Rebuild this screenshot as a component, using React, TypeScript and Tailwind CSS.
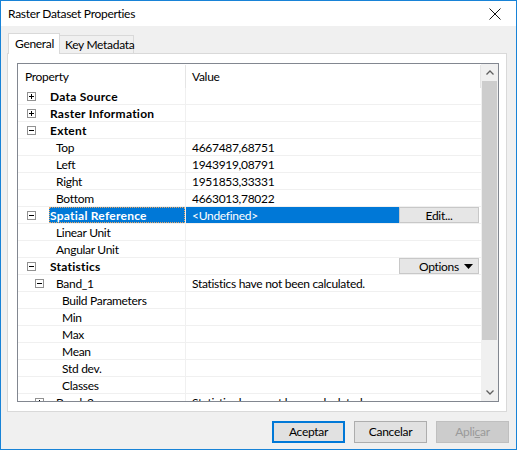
import { ReactNode } from "react";

type Row = {
  label: string;
  value?: string;
  bold?: boolean;
  box?: "plus" | "minus";
  // padding before the box / label, written out as full classes
  boxCls?: string;
  labelCls: string;
  selected?: boolean;
  action?: "edit" | "options";
};

const rows: Row[] = [
  { label: "Data Source", bold: true, box: "plus", boxCls: "w-[32px] pl-[9px]", labelCls: "" },
  { label: "Raster Information", bold: true, box: "plus", boxCls: "w-[32px] pl-[9px]", labelCls: "" },
  { label: "Extent", bold: true, box: "minus", boxCls: "w-[32px] pl-[9px]", labelCls: "" },
  { label: "Top", value: "4667487,68751", labelCls: "pl-[38px]" },
  { label: "Left", value: "1943919,08791", labelCls: "pl-[38px]" },
  { label: "Right", value: "1951853,33331", labelCls: "pl-[38px]" },
  { label: "Bottom", value: "4663013,78022", labelCls: "pl-[38px]" },
  {
    label: "Spatial Reference",
    value: "<Undefined>",
    bold: true,
    box: "minus",
    boxCls: "w-[31px] pl-[9px]",
    labelCls: "",
    selected: true,
    action: "edit",
  },
  { label: "Linear Unit", labelCls: "pl-[38px]" },
  { label: "Angular Unit", labelCls: "pl-[38px]" },
  { label: "Statistics", bold: true, box: "minus", boxCls: "w-[32px] pl-[9px]", labelCls: "", action: "options" },
  {
    label: "Band_1",
    value: "Statistics have not been calculated.",
    box: "minus",
    boxCls: "w-[38px] pl-[17px]",
    labelCls: "",
  },
  { label: "Build Parameters", labelCls: "pl-[44px]" },
  { label: "Min", labelCls: "pl-[44px]" },
  { label: "Max", labelCls: "pl-[44px]" },
  { label: "Mean", labelCls: "pl-[44px]" },
  { label: "Std dev.", labelCls: "pl-[44px]" },
  { label: "Classes", labelCls: "pl-[44px]" },
  {
    label: "Band_2",
    value: "Statistics have not been calculated.",
    box: "plus",
    boxCls: "w-[38px] pl-[17px]",
    labelCls: "",
  },
];

const ExpandBox = ({ kind }: { kind: "plus" | "minus" }) => (
  <svg width="9" height="9" viewBox="0 0 9 9" className="block">
    <rect x="0.5" y="0.5" width="8" height="8" fill="#fff" stroke="#919191" />
    <line x1="2" y1="4.5" x2="7" y2="4.5" stroke="#000" />
    {kind === "plus" && <line x1="4.5" y1="2" x2="4.5" y2="7" stroke="#000" />}
  </svg>
);

const SmallButton = ({ children }: { children: ReactNode }) => (
  <div className="mr-[2px] flex h-[16px] w-[80px] items-center border border-[#c8c8c8] bg-[#e6e6e6] pt-px text-black">
    {children}
  </div>
);

const GridRow = ({ row }: { row: Row }) => (
  <div className="flex h-[17px] border-b border-[#f0f0f0] leading-[16px]">
    <div className="flex w-[168px] shrink-0 items-center border-r border-[#f0f0f0]">
      {row.box && (
        <div className={`flex h-full shrink-0 items-center ${row.boxCls}`}>
          <ExpandBox kind={row.box} />
        </div>
      )}
      <div
        className={`flex h-full flex-1 items-center whitespace-nowrap pt-px ${row.labelCls} ${
          row.selected
            ? "bg-[#0078d7] pl-[1px] text-white outline-1 outline-dotted outline-offset-[-1px] outline-[#e9a866]"
            : ""
        } ${row.bold ? "font-bold tracking-[0.25px]" : ""}`}
      >
        {row.label}
      </div>
    </div>
    <div className="flex flex-1 items-center">
      <div
        className={`flex h-full flex-1 items-center whitespace-nowrap pl-[6px] pt-px ${
          row.selected ? "bg-[#0078d7] text-white" : ""
        }`}
      >
        {row.value}
      </div>
      {row.action === "edit" && (
        <SmallButton>
          <span className="flex-1 text-center">Edit...</span>
        </SmallButton>
      )}
      {row.action === "options" && (
        <SmallButton>
          <span className="pl-[19px]">Options</span>
          <svg width="9" height="5" viewBox="0 0 9 5" className="ml-auto mr-[5px]">
            <path d="M0 0 H9 L4.5 5 Z" fill="#000" />
          </svg>
        </SmallButton>
      )}
    </div>
  </div>
);

const DialogButton = ({
  children,
  primary,
  disabled,
}: {
  children: ReactNode;
  primary?: boolean;
  disabled?: boolean;
}) => (
  <div
    className={`flex h-[22px] w-[73px] items-center justify-center ${
      primary
        ? "border-2 border-[#0078d7] bg-[#e1e1e1] text-black"
        : disabled
          ? "border border-[#bfbfbf] bg-[#cccccc] text-[#9a9a9a]"
          : "border border-[#adadad] bg-[#e1e1e1] text-black"
    }`}
  >
    {children}
  </div>
);

export default function App() {
  return (
    <div className="flex h-[450px] w-[517px] flex-col border border-[#1883d7] bg-[#f0f0f0] font-['Lato',sans-serif] text-[12px] tracking-[-0.3px] text-black">
      {/* title bar */}
      <div className="flex h-[25px] shrink-0 items-center justify-between bg-white pl-[7px] pr-[15px]">
        <span>Raster Dataset Properties</span>
        <svg width="12" height="12" viewBox="0 0 12 12">
          <path d="M0.5 0.5 L11.5 11.5 M11.5 0.5 L0.5 11.5" stroke="#111" strokeWidth="1" />
        </svg>
      </div>

      {/* tabs */}
      <div className="mt-[7px] flex items-end pl-[7px]">
        <div className="relative z-10 -mb-px flex h-[21px] w-[52px] items-center whitespace-nowrap border border-b-0 border-[#d9d9d9] bg-white pl-[6px]">
          General
        </div>
        <div className="flex h-[18px] w-[74px] items-center whitespace-nowrap border border-b-0 border-l-0 border-[#d9d9d9] bg-[#f0f0f0] pl-[5px]">
          Key Metadata
        </div>
      </div>

      {/* tab panel */}
      <div className="ml-[6px] mr-[9px] flex h-[359px] shrink-0 flex-col border border-[#d9d9d9] bg-white pl-[9px] pr-[7px] pt-[9px]">
        <div className="flex h-[339px] border border-[#828790]">
          <div className="flex flex-1 flex-col overflow-hidden">
            {/* header */}
            <div className="flex h-[24px] shrink-0 items-center pt-px">
              <div className="flex h-full w-[168px] items-center border-r border-[#e5e5e5] pl-[7px]">
                Property
              </div>
              <div className="flex h-full flex-1 items-center border-r border-[#e5e5e5] pl-[6px]">
                Value
              </div>
            </div>
            {rows.map((r) => (
              <GridRow key={r.label} row={r} />
            ))}
          </div>
          {/* scrollbar */}
          <div className="flex w-[17px] shrink-0 flex-col bg-[#f0f0f0]">
            <div className="flex h-[17px] items-center justify-center">
              <svg width="8" height="5" viewBox="0 0 8 5">
                <path d="M0.5 4.5 L4 1 L7.5 4.5" fill="none" stroke="#606060" strokeWidth="1.3" />
              </svg>
            </div>
            <div className="mx-[1px] h-[259px] bg-[#cdcdcd]" />
            <div className="flex-1" />
            <div className="flex h-[17px] items-center justify-center">
              <svg width="8" height="5" viewBox="0 0 8 5">
                <path d="M0.5 0.5 L4 4 L7.5 0.5" fill="none" stroke="#606060" strokeWidth="1.3" />
              </svg>
            </div>
          </div>
        </div>
      </div>

      {/* dialog buttons */}
      <div className="flex flex-1 items-start justify-end gap-[9px] pr-[7px] pt-[9px]">
        <DialogButton primary>Aceptar</DialogButton>
        <DialogButton>Cancelar</DialogButton>
        <DialogButton disabled>
          <span>
            Apli<span className="underline">c</span>ar
          </span>
        </DialogButton>
      </div>
    </div>
  );
}
